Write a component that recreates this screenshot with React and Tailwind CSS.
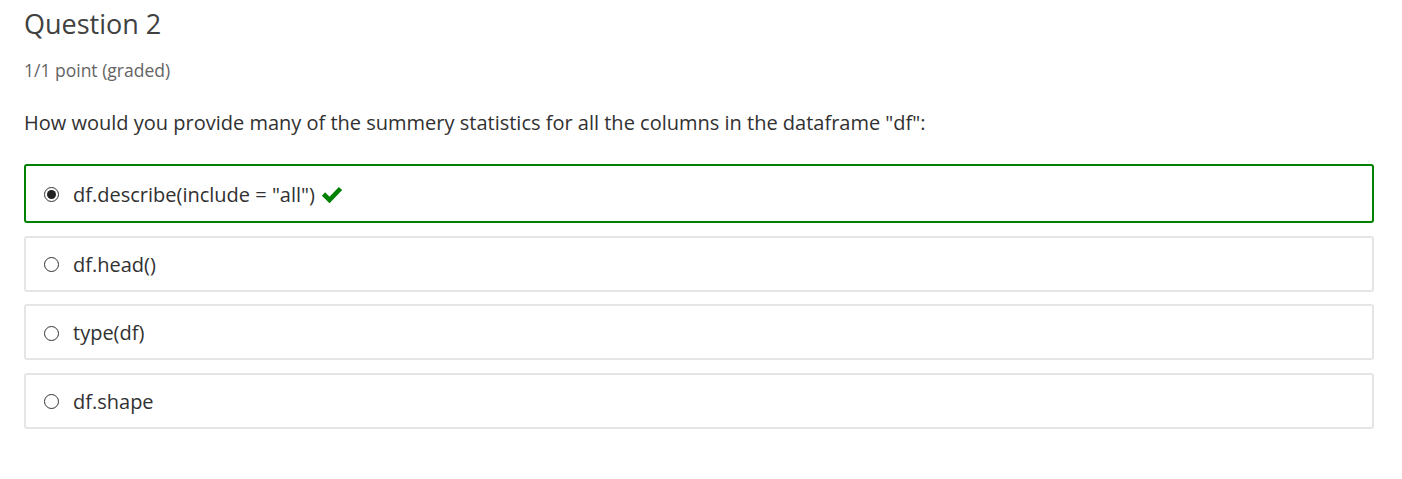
const OPTIONS = [
  { label: 'df.describe(include = "all")', selected: true, correct: true },
  { label: "df.head()" },
  { label: "type(df)" },
  { label: "df.shape" },
];

function Radio({ checked }) {
  return (
    <span className="w-[15px] h-[15px] rounded-full border-[1.5px] border-[#333] bg-white flex items-center justify-center shrink-0">
      {checked && <span className="w-[9px] h-[9px] rounded-full bg-[#222]" />}
    </span>
  );
}

function Check() {
  return (
    <svg viewBox="0 0 22 17" className="w-[22px] h-[17px]">
      <polyline points="2.5,8 8.5,14 19.5,2.5" fill="none" stroke="#008100" strokeWidth="4.6" strokeLinejoin="miter" />
    </svg>
  );
}

export default function App() {
  return (
    <div className="px-6 pt-[7px] bg-white min-h-[479px] text-[#313131] font-['Open_Sans',sans-serif]">
      <h3 className="text-[27px] leading-[34px] text-[#414141]">Question 2</h3>
      <div className="mt-[17px] text-[17.5px] leading-[24px] text-[#646464]">1/1 point (graded)</div>
      <p className="mt-[27px] text-[20px] leading-[28px]">
        How would you provide many of the summery statistics for all the columns in the dataframe "df":
      </p>
      <div className="mt-[27px] flex flex-col gap-[12.5px] w-[1350px]">
        {OPTIONS.map((o, i) => (
          <label
            key={i}
            className={`flex items-center gap-[14px] px-[18px] pt-[2px] rounded-[3px] border-2 ${
              o.selected ? "border-[#008100] h-[59px]" : "border-[#e5e5e5] h-[56px]"
            }`}
          >
            <Radio checked={o.selected} />
            <span className="text-[20px] leading-[28px] flex items-center gap-[6px]">
              {o.label}
              {o.correct && <Check />}
            </span>
          </label>
        ))}
      </div>
    </div>
  );
}
